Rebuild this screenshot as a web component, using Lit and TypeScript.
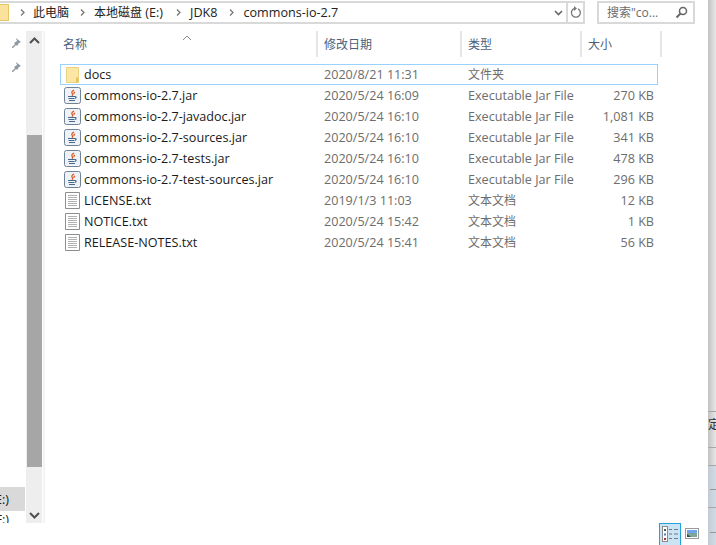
import { LitElement, html, css, svg } from "lit";
import { customElement } from "lit/decorators.js";

const folder = svg`<svg width="13" height="16" viewBox="0 0 13 16"><path d="M.5.5h12v15H.5z" fill="#fce6a4" stroke="#ecd083"/><path d="M10 15.500v-5h2.500v5z" fill="#e9c35f"/></svg>`;
const jar = svg`<svg width="17" height="17" viewBox="0 0 17 17"><rect x=".5" y=".5" width="16" height="16" rx="2" fill="#eef1f5" stroke="#6f8296"/><path d="M10 3c-2 1.500-3 2-1.500 4 .5.700-.2 1.200-.7 1.500M11 5c-1 .6-1.500 1-.8 2" fill="none" stroke="#d9531e" stroke-width="1.200"/><path d="M4 9.500h7c1.500 0 1.500 1.500 0 2M4.500 11.500h6M5 13.500h6" fill="none" stroke="#43698e" stroke-width="1.100"/></svg>`;
const txt = svg`<svg width="15" height="17" viewBox="0 0 15 17"><path d="M.5.5h14v16H.5z" fill="#fff" stroke="#8e8e8e"/><path d="M3 3.500h9M3 5.500h9M3 7.500h9M3 9.500h9M3 11.500h9M3 13.500h9" stroke="#b0b0b0"/></svg>`;
const pin = svg`<svg width="12" height="12" viewBox="0 0 12 12"><path d="M6 1l5 4-2 1-2 3-1-1-3 3-1 0 0-1 3-3-1-1 3-2z" fill="#8f9aa3"/></svg>`;
const up = svg`<svg width="11" height="7" viewBox="0 0 11 7"><path d="M1 6l4.500-4.500L10 6" fill="none" stroke="#505050" stroke-width="2"/></svg>`;
const down = svg`<svg width="11" height="7" viewBox="0 0 11 7"><path d="M1 1l4.500 4.500L10 1" fill="none" stroke="#505050" stroke-width="2"/></svg>`;

interface Row { icon: "f" | "j" | "t"; name: string; date: string; type: string; size: string; sel?: boolean }
const rows: Row[] = [
  { icon: "f", name: "docs", date: "2020/8/21 11:31", type: "文件夹", size: "", sel: true },
  { icon: "j", name: "commons-io-2.7.jar", date: "2020/5/24 16:09", type: "Executable Jar File", size: "270 KB" },
  { icon: "j", name: "commons-io-2.7-javadoc.jar", date: "2020/5/24 16:10", type: "Executable Jar File", size: "1,081 KB" },
  { icon: "j", name: "commons-io-2.7-sources.jar", date: "2020/5/24 16:10", type: "Executable Jar File", size: "341 KB" },
  { icon: "j", name: "commons-io-2.7-tests.jar", date: "2020/5/24 16:10", type: "Executable Jar File", size: "478 KB" },
  { icon: "j", name: "commons-io-2.7-test-sources.jar", date: "2020/5/24 16:10", type: "Executable Jar File", size: "296 KB" },
  { icon: "t", name: "LICENSE.txt", date: "2019/1/3 11:03", type: "文本文档", size: "12 KB" },
  { icon: "t", name: "NOTICE.txt", date: "2020/5/24 15:42", type: "文本文档", size: "1 KB" },
  { icon: "t", name: "RELEASE-NOTES.txt", date: "2020/5/24 15:41", type: "文本文档", size: "56 KB" },
];

@customElement("app-root")
export class AppRoot extends LitElement {
  static styles = css`
    :host { display: grid; grid-template-columns: 708px 8px; width: 716px; height: 545px; overflow: hidden; background: #fff; font-family: "Open Sans", "Noto Sans CJK SC", sans-serif; font-size: 12.6px; color: #1a1a1a; }
    * { box-sizing: border-box; }
    .cjk { font-size: 12px; }
    .win { display: flex; flex-direction: column; height: 545px; min-width: 0; }

    .top { display: flex; height: 24px; margin-top: 1px; flex: none; }
    .crumb { width: 585px; height: 23px; border: 2px solid #d9d9d9; border-left: 0; display: flex; align-items: center; flex: none; }
    .crumb .tree { width: 9px; height: 17px; background: #fbe29c; border: 1px solid #e8c76a; border-left: 0; flex: none; }
    .crumb .parts { display: flex; align-items: center; flex: 1; min-width: 0; }
    .crumb .sep { width: 5px; height: 7px; margin: 0 9px 0 11px; flex: none; }
    .crumb .sep:first-child { margin-right: 8px; }
    .crumb .p { white-space: nowrap; color: #222; line-height: 20px; }
    .crumb .disk { margin-right: 2px; }
    .crumb .jdk { margin-right: 1px; }
    .crumb .dd { width: 15px; display: flex; justify-content: center; flex: none; }
    .crumb .ref { width: 17px; height: 21px; border-left: 2px solid #d9d9d9; display: flex; align-items: center; justify-content: center; flex: none; }
    .search { margin-left: 12px; width: 98px; height: 23px; border: 2px solid #d9d9d9; display: flex; align-items: center; padding: 0 5px 0 8px; justify-content: space-between; color: #6b6b6b; flex: none; line-height: 20px; white-space: nowrap; font-size: 12px; }

    .body { flex: 1; display: flex; min-height: 0; }
    .nav { width: 45px; flex: none; display: flex; height: 492px; margin-top: 6px; border-right: 2px solid #f3f3f3; }
    .navl { width: 26px; flex: none; display: flex; flex-direction: column; }
    .pins { display: flex; flex-direction: column; gap: 12px; padding: 6px 0 0 10px; flex: 1; }
    .navi { height: 24px; display: flex; justify-content: flex-end; align-items: center; overflow: hidden; white-space: nowrap; width: 25px; padding-right: 16px; flex: none; }
    .navi.on { background: #d9d9d9; }
    .navi.last { height: 12px; align-items: flex-start; }
    .sb { width: 16px; flex: none; background: #eee; display: flex; flex-direction: column; align-items: center; }
    .sb .a { height: 17px; display: flex; align-items: center; flex: none; padding-top: 2px; }
    .sb .gap1 { height: 87px; flex: none; }
    .sb .thumb { width: 15px; height: 332px; background: #a6a6a6; flex: none; }
    .sb .gap2 { flex: 1; }

    .main { flex: 1; min-width: 0; display: flex; flex-direction: column; }
    .cols { display: grid; grid-template-columns: 273px 144px 120px 80px; height: 26px; margin-top: 6px; flex: none; }
    .col { border-right: 2px solid #e5e5e5; color: #4c607a; display: flex; align-items: center; padding: 2px 0 0 6px; line-height: 20px; position: relative; font-size: 12px; }
    .col:first-child { padding-left: 18px; }
    .col .caret { position: absolute; left: 137px; top: -4px; }
    .list { padding: 7px 0 0 15px; display: flex; flex-direction: column; }
    .row { width: 598px; height: 21px; display: grid; grid-template-columns: 257px 144px 120px 72px; align-items: center; border: 1px solid transparent; line-height: 18px; white-space: nowrap; }
    .row.sel { border-color: #99d1ff; }
    .nm { display: flex; align-items: center; gap: 3px; padding-left: 3px; }
    .ic { width: 17px; height: 17px; display: flex; align-items: center; justify-content: center; flex: none; }
    .d, .t, .s { color: #6d6d6d; }
    .d, .t { padding-left: 6px; overflow: hidden; }
    .s { text-align: right; }

    .status { margin-top: auto; height: 22px; display: flex; align-items: flex-end; justify-content: flex-end; flex: none; gap: 4px; padding-right: 9px; }
    .vbtn { width: 22px; height: 22px; background: #c9e5f5; border: 1px solid #26a0da; border-bottom: 0; display: flex; align-items: center; justify-content: center; }
    .vimg { height: 22px; display: flex; align-items: center; }

    .strip { width: 8px; height: 545px; display: flex; flex-direction: column; background: linear-gradient(to right, #c2c2c2, #e8e8e8); overflow: hidden; }
    .seg { border-bottom: 1px solid #a8a8a8; flex: none; }
    .seg.blue { background: linear-gradient(to right, #c2ccd6, #d2dbe4); display: flex; flex-direction: column; justify-content: flex-end; }
    .sp { height: 412px; flex: none; border-bottom: 1px solid #a8a8a8; }
    .cut { line-height: 16px; height: 36px; padding-top: 5px; white-space: nowrap; color: #333; font-size: 12px; }
    .sm { height: 18px; }
    .b1 { height: 42px; }
    .b2 { height: 37px; border: 0; }
    .dash { border-top: 1px dashed #999; margin: 0 0 17px 2px; }
    .b2 .dash { margin-bottom: 12px; }
  `;

  private icon(k: string) {
    return k === "f" ? folder : k === "j" ? jar : txt;
  }

  private type(t: string) {
    return t.startsWith("Exec") ? t : html`<span class="cjk">${t}</span>`;
  }

  render() {
    const sep = svg`<svg class="sep" viewBox="0 0 5 7"><path d="M1 .5l3 3-3 3" fill="none" stroke="#777" stroke-width="1.300"/></svg>`;
    return html`
      <div class="win">
        <div class="top">
          <div class="crumb">
            <div class="tree"></div>
            <div class="parts">
              ${sep}<span class="p cjk">此电脑</span>
              ${sep}<span class="p disk"><span class="cjk">本地磁盘</span> (E:)</span>
              ${sep}<span class="p jdk">JDK8</span>
              ${sep}<span class="p">commons-io-2.7</span>
            </div>
            <div class="dd"><svg width="9" height="6" viewBox="0 0 9 6"><path d="M1 1l3.500 3.500L8 1" fill="none" stroke="#666" stroke-width="1.600"/></svg></div>
            <div class="ref"><svg width="12" height="13" viewBox="0 0 12 13"><path d="M8 2.700a4.500 4.500 0 1 1-3.500-.3" fill="none" stroke="#777" stroke-width="1.300"/><path d="M4 0l3 2.500-3 2.500z" fill="#777"/></svg></div>
          </div>
          <div class="search">
            <span>搜索"co...</span>
            <svg width="13" height="13" viewBox="0 0 13 13"><circle cx="8" cy="5" r="3.500" fill="none" stroke="#666" stroke-width="1.500"/><path d="M5.500 7.500L1.500 11.500" stroke="#666" stroke-width="2"/></svg>
          </div>
        </div>
        <div class="body">
          <div class="nav">
            <div class="navl">
              <div class="pins">${pin}${pin}</div>
              <div class="navi on"><span>(E:)</span></div>
              <div class="navi last"><span>(F:)</span></div>
            </div>
            <div class="sb">
              <div class="a">${up}</div>
              <div class="gap1"></div>
              <div class="thumb"></div>
              <div class="gap2"></div>
              <div class="a">${down}</div>
            </div>
          </div>
          <div class="main">
            <div class="cols">
              <div class="col">名称<span class="caret"><svg width="10" height="6" viewBox="0 0 10 6"><path d="M1 5l4-4 4 4" fill="none" stroke="#8a8a8a"/></svg></span></div>
              <div class="col">修改日期</div>
              <div class="col">类型</div>
              <div class="col">大小</div>
            </div>
            <div class="list">
              ${rows.map(
                (r) => html`<div class="row ${r.sel ? "sel" : ""}">
                  <div class="nm"><span class="ic">${this.icon(r.icon)}</span><span>${r.name}</span></div>
                  <div class="d">${r.date}</div>
                  <div class="t">${this.type(r.type)}</div>
                  <div class="s">${r.size}</div>
                </div>`
              )}
            </div>
            <div class="status">
              <div class="vbtn">
                <svg width="17" height="17" viewBox="0 0 17 17"><rect x=".5" y=".5" width="5" height="15" fill="#fff" stroke="#8a8a8a"/><rect x="2" y="3" width="2" height="2" fill="#555"/><rect x="2" y="7.500" width="2" height="2" fill="#4a7fc1"/><rect x="2" y="12" width="2" height="2" fill="#b03030"/><path d="M7 3.500h3M12 3.500h4M7 8h3M12 8h4M7 12.500h3M12 12.500h4" stroke="#777" stroke-width="1.200"/></svg>
              </div>
              <div class="vimg">
                <svg width="14" height="12" viewBox="0 0 14 12"><rect x=".5" y=".5" width="13" height="10" fill="#fff" stroke="#999"/><rect x="2" y="2" width="10" height="3" fill="#6fa4ee"/><rect x="2" y="5" width="10" height="4" fill="#7fa59a"/><path d="M2 6l4 3H2z" fill="#2e4f4a"/></svg>
              </div>
            </div>
          </div>
        </div>
      </div>
      <div class="strip">
        <div class="sp"></div>
        <div class="seg cut">定报</div>
        <div class="seg sm"></div>
        <div class="seg blue b1"><div class="dash"></div></div>
        <div class="seg blue b2"><div class="dash"></div></div>
      </div>
    `;
  }
}
